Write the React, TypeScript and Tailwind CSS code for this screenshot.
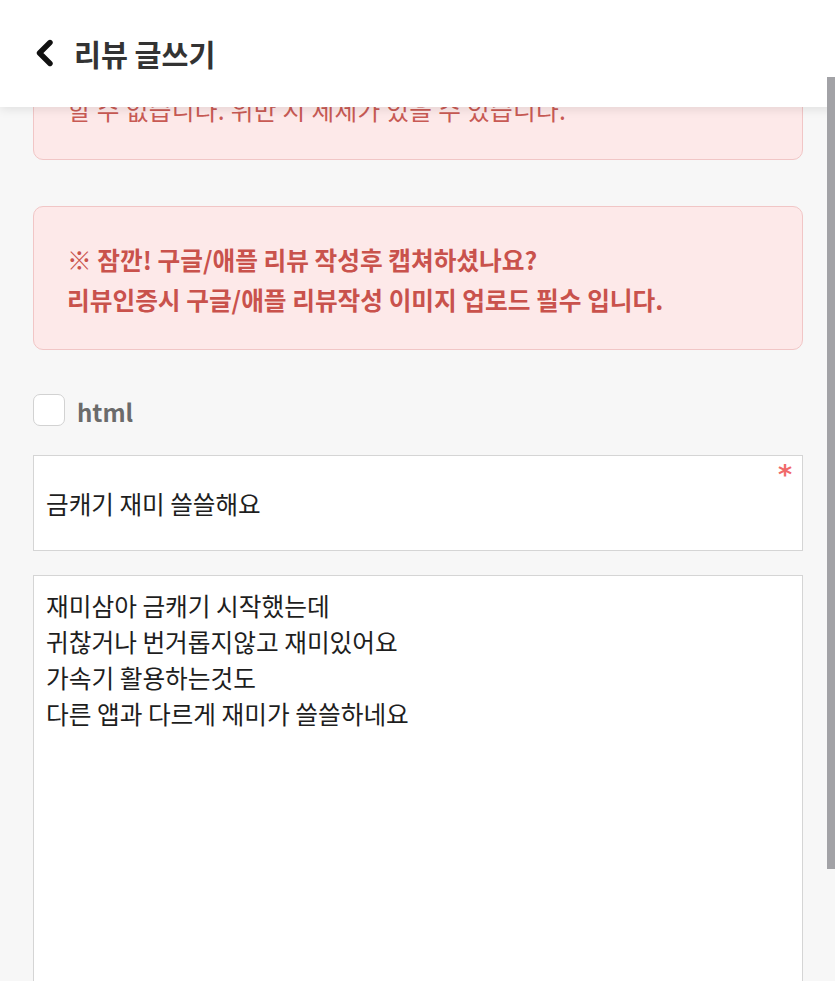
import React from "react";

const ko = { fontFamily: '"Noto Sans CJK KR", "Noto Sans", sans-serif' };

export default function App() {
  return (
    <div className="relative h-[981px] w-[835px] overflow-hidden bg-[#f7f7f7]" style={ko}>
      {/* scrolled content */}
      <div className="flex flex-col pl-[33px] pr-[32px] pt-[16px]">
        <div className="rounded-[10px] border border-[#f1c6c6] bg-[#fde9e9] pl-[34px] pr-[20px] pt-[72px] pb-[30px] text-[24.7px] font-normal leading-[40px] text-[#c85a54]">
          <p className="tracking-[0.3px]">할 수 없습니다. 위반 시 제제가 있을 수 있습니다.</p>
        </div>

        <div className="mt-[46px] rounded-[10px] border border-[#f1c6c6] bg-[#fde9e9] pl-[33px] pr-[10px] pt-[32px] pb-[30px] text-[24.7px] font-bold leading-[40px] text-[#c9524c]">
          <p>※ 잠깐! 구글/애플 리뷰 작성후 캡쳐하셨나요?</p>
          <p>리뷰인증시 구글/애플 리뷰작성 이미지 업로드 필수 입니다.</p>
        </div>

        <label className="mt-[44px] flex h-[32px] items-center gap-[12px]">
          <span className="h-[32px] w-[32px] rounded-[7px] border border-[#d2d2d2] bg-white" />
          <span className="mt-[4px] text-[24px] font-bold leading-none text-[#6b6b6b]">html</span>
        </label>

        <div className="relative mt-[29px] flex h-[96px] items-center border border-[#d5d5d5] bg-white pl-[12px]">
          <span className="text-[24.6px] leading-none text-[#1e1e1e]">금캐기 재미 쓸쓸해요</span>
          <span className="absolute right-[10px] top-[5px] text-[27px] font-bold leading-none text-[#f06a6a]" style={{ fontFamily: '"DejaVu Sans", sans-serif' }}>*</span>
        </div>

        <div className="mt-[24px] h-[500px] border border-[#d5d5d5] bg-white pl-[12px] pt-[11px] text-[24.7px] leading-[36px] text-[#1e1e1e]">
          <p>재미삼아 금캐기 시작했는데</p>
          <p>귀찮거나 번거롭지않고 재미있어요</p>
          <p>가속기 활용하는것도</p>
          <p>다른 앱과 다르게 재미가 쓸쓸하네요</p>
        </div>
      </div>

      {/* fixed header */}
      <div className="absolute left-0 top-0 flex h-[107px] w-full items-center bg-white pl-[35px] shadow-[0_2px_10px_rgba(0,0,0,0.10)]">
        <svg width="19" height="28" viewBox="0 0 19 28" className="mt-[-1px]">
          <polyline points="15,3.5 4.5,14 15,24.5" fill="none" stroke="#111" strokeWidth="5.4" strokeLinecap="round" strokeLinejoin="round" />
        </svg>
        <span className="ml-[20px] text-[29.3px] font-bold leading-none text-[#333]">리뷰 글쓰기</span>
      </div>

      {/* scrollbar overlay */}
      <div className="absolute right-0 top-[77px] h-[792px] w-[8px] bg-[#a2a2a6]" />
    </div>
  );
}
